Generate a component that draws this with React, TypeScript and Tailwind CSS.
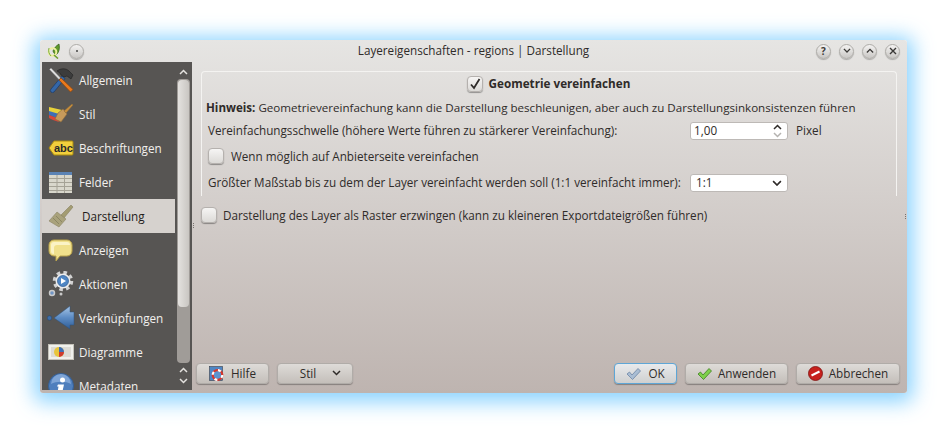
import React from "react";

const HammerIcon = () => (
  <svg width="26" height="26" viewBox="0 0 26 26">
    <path d="M3 22L14 9l3 2.500L6 25a2 2 0 0 1-3-3z" fill="#3467a8" stroke="#1c3a66" strokeWidth="0.7" />
    <path d="M9 4c4-3 9-3 12 0l4 4-2 4-4-3-3 1-3-2c-1-2-2-3-4-4z" fill="#3c3c3c" stroke="#1a1a1a" strokeWidth="0.5" />
    <path d="M1.500 2.500l1.500-1.500 9.500 10-1.500 1.500z" fill="#e2e2e2" stroke="#888" strokeWidth="0.5" />
    <path d="M11 13l2-2 12 11.500-2.500 2.500z" fill="#e9791c" stroke="#8a4510" strokeWidth="0.7" />
  </svg>
);

const StyleIcon = () => (
  <svg width="26" height="22" viewBox="0 0 26 22">
    <path d="M1 4l13 3-4 7-9-4z" fill="#e8d23a" />
    <path d="M1 8l10 3-2 4-8-3z" fill="#3f6fb5" />
    <path d="M1 12l8 3 2 4-6-2-4-2z" fill="#d8483a" />
    <path d="M10 10l5-4 4 5-6 8-6-3z" fill="#c79a5b" stroke="#8b6a3a" strokeWidth="0.6" />
    <path d="M16 8l8-7 1 1-7 8z" fill="#c98f3c" stroke="#8b6a3a" strokeWidth="0.5" />
  </svg>
);

const AbcIcon = () => (
  <svg width="26" height="16" viewBox="0 0 26 16">
    <path d="M6 1h18a1 1 0 0 1 1 1v12a1 1 0 0 1-1 1H6L1 8z" fill="#f2cf3c" stroke="#a98a10" />
    <text x="6" y="12" fontSize="11" fontWeight="700" fill="#2a2a2a" fontFamily="'Liberation Sans', sans-serif">abc</text>
  </svg>
);

const TableIcon = () => (
  <svg width="23" height="21" viewBox="0 0 23 21">
    <rect x="0" y="0" width="23" height="21" fill="#d9d7cc" />
    <rect x="0" y="0" width="23" height="3" fill="#5b83b5" />
    <path d="M0 6.500h23M0 10.500h23M0 14.500h23M0 18.500h23M8 3v18M15.500 3v18" stroke="#a5a296" strokeWidth="1" />
  </svg>
);

const BrushIcon = () => (
  <svg width="26" height="24" viewBox="0 0 26 24">
    <path d="M13 11L23 1l2 2-9 11z" fill="#a39c72" stroke="#7c7656" strokeWidth="0.5" />
    <path d="M9 8l9 7-7 8-10-6z" fill="#a9a27c" stroke="#827c5c" strokeWidth="0.5" />
    <path d="M5 14l6 6M8 12l6 6" stroke="#858060" strokeWidth="0.8" />
  </svg>
);

const BubbleIcon = () => (
  <svg width="25" height="23" viewBox="0 0 25 23">
    <path d="M6 1h13a5 5 0 0 1 5 5v6a5 5 0 0 1-5 5h-7l-4 5 0-5H6a5 5 0 0 1-5-5V6a5 5 0 0 1 5-5z" fill="#f0e08c" stroke="#b9a24a" />
    <path d="M6 3h13a3 3 0 0 1 3 3H9a3 3 0 0 0-3 3v6a3 3 0 0 1-3-3V6a3 3 0 0 1 3-3z" fill="#fbf3c6" />
  </svg>
);

const GearIcon = () => (
  <svg width="26" height="26" viewBox="0 0 26 26">
    <circle cx="15" cy="10" r="8.500" fill="none" stroke="#d2d2d2" strokeWidth="3.500" strokeDasharray="3.500 3.200" />
    <circle cx="15" cy="10" r="7.500" fill="#ececec" />
    <circle cx="15" cy="10" r="5.500" fill="#4f86c4" stroke="#2b5a94" strokeWidth="0.7" />
    <path d="M13 7l5 3-5 3z" fill="#fff" />
    <circle cx="4" cy="22" r="2.500" fill="#6f94c4" stroke="#c9c9c9" strokeWidth="1.500" />
    <circle cx="13" cy="23" r="1.500" fill="#c9c9c9" />
  </svg>
);

const LinkIcon = () => (
  <svg width="28" height="24" viewBox="0 0 28 24">
    <defs>
      <linearGradient id="arrowFill" x1="0" y1="0" x2="0" y2="1">
        <stop offset="0" stopColor="#a9c7e6" />
        <stop offset="0.5" stopColor="#5d8cc4" />
        <stop offset="1" stopColor="#2f5d96" />
      </linearGradient>
    </defs>
    <circle cx="2.500" cy="12" r="2.300" fill="#3f6ea8" stroke="#24466f" strokeWidth="0.5" />
    <path d="M7 12L23 0v6h4v13h-4v4z" fill="url(#arrowFill)" stroke="#2d527f" strokeWidth="0.5" />
  </svg>
);

const ChartIcon = () => (
  <svg width="26" height="18" viewBox="0 0 26 18">
    <rect x="0.500" y="1.500" width="25" height="15" fill="#f0f0ec" stroke="#c5c3ba" />
    <rect x="3" y="4" width="20" height="10" fill="#dddbd4" />
    <circle cx="11" cy="9" r="5" fill="#e8c53c" />
    <path d="M11 9V4a5 5 0 0 1 5 5z" fill="#3f6fb5" />
    <path d="M11 9h5a5 5 0 0 1-5 5z" fill="#cf3b2f" />
  </svg>
);

const InfoIcon = () => (
  <svg width="26" height="26" viewBox="0 0 26 26">
    <circle cx="13" cy="13" r="12.500" fill="#4f7fbd" stroke="#355f96" />
    <path d="M3 11a10 10 0 0 1 20 0c-5-3-15-3-20 0z" fill="#7fa5d6" />
    <circle cx="14.500" cy="7" r="2.500" fill="#fff" />
    <path d="M10 11.500h6l-2 9h2l-.5 2H9l1.500-9H9z" fill="#fff" />
  </svg>
);

const navItems: { label: string; icon: React.ReactNode; active?: boolean }[] = [
  { label: "Allgemein", icon: <HammerIcon /> },
  { label: "Stil", icon: <StyleIcon /> },
  { label: "Beschriftungen", icon: <AbcIcon /> },
  { label: "Felder", icon: <TableIcon /> },
  { label: "Darstellung", icon: <BrushIcon />, active: true },
  { label: "Anzeigen", icon: <BubbleIcon /> },
  { label: "Aktionen", icon: <GearIcon /> },
  { label: "Verknüpfungen", icon: <LinkIcon /> },
  { label: "Diagramme", icon: <ChartIcon /> },
  { label: "Metadaten", icon: <InfoIcon /> },
];

const Chevron: React.FC<{ up?: boolean; className?: string; size?: number }> = ({
  up,
  className,
  size = 9,
}) => (
  <svg width={size} height={size * 0.67} viewBox="0 0 9 6" className={className} fill="none" stroke="currentColor" strokeWidth="1.500">
    <path d={up ? "M1 5l3.500-3.500L8 5" : "M1 1l3.500 3.500L8 1"} />
  </svg>
);

const TitleButton: React.FC<{ children: React.ReactNode }> = ({ children }) => (
  <div className="flex h-[15px] w-[15px] items-center justify-center rounded-full border border-[#aeaca8] bg-gradient-to-b from-[#f4f3f2] to-[#c9c7c4] text-[#3a3836] shadow-[0_1px_1px_rgba(0,0,0,0.25)]">
    {children}
  </div>
);

const Checkbox: React.FC<{ checked?: boolean }> = ({ checked }) => (
  <div className="flex h-[16px] w-[16px] shrink-0 items-center justify-center rounded-[4px] border border-[#b5b1ae] bg-gradient-to-b from-[#f6f5f4] to-[#dcdad7] shadow-[0_1px_1px_rgba(0,0,0,0.35)]">
    {checked && (
      <svg width="12" height="12" viewBox="0 0 12 12" fill="none" stroke="#2f2c2a" strokeWidth="1.800">
        <path d="M2 6.500l3 3.500 5.500-9" />
      </svg>
    )}
  </div>
);

const DialogButton: React.FC<{ children: React.ReactNode; className?: string }> = ({
  children,
  className,
}) => (
  <div
    className={`flex h-[21px] items-center justify-center rounded-[4px] border bg-gradient-to-b shadow-[0_1px_1px_rgba(0,0,0,0.3)] ${
      className ?? ""
    }`}
  >
    {children}
  </div>
);

const CheckMark: React.FC<{ fill: string; stroke: string }> = ({ fill, stroke }) => (
  <svg width="15" height="12" viewBox="0 0 15 12">
    <path d="M1 6l2.500-2 2.500 3 6-6.500L14.500 3 6.500 11.500z" fill={fill} stroke={stroke} strokeWidth="0.8" />
  </svg>
);

const SplitterDots = ({ className }: { className: string }) => (
  <div className={`absolute flex flex-col gap-[1px] ${className}`}>
    <div className="h-[1px] w-[1px] bg-[#77726e]" />
    <div className="h-[1px] w-[1px] bg-[#77726e]" />
    <div className="h-[1px] w-[1px] bg-[#77726e]" />
  </div>
);

export default function App() {
  return (
    <div className="h-[434px] w-[947px] overflow-hidden bg-white pl-[40px] pt-[40px] font-['Open_Sans','Noto_Sans',sans-serif] text-[11.7px] text-[#2f2b29]">
      <div className="flex h-[353px] w-[867px] flex-col overflow-hidden rounded-[3px] bg-gradient-to-b from-[#e6e5e3] to-[#beb4b0] shadow-[0_3px_20px_6px_rgba(110,200,255,0.8)]">
        {/* title bar */}
        <div className="relative flex h-[22px] shrink-0 items-center justify-between pl-[7px] pr-[7px]">
          <div className="flex items-center gap-[8px]">
            <svg width="14" height="16" viewBox="0 0 14 16">
              <path d="M6 8c1-3 3-5 6-7 1 4 0 8-2 10-1 1-3 0-4-3z" fill="#5f9a2a" stroke="#2f5a12" strokeWidth="0.7" />
              <circle cx="5.500" cy="9" r="3.800" fill="none" stroke="#eef0a0" strokeWidth="2" />
              <path d="M7 12l4 3.500" stroke="#6f9e2c" strokeWidth="1.600" />
              <path d="M2 5c-1 3 0 6 2 8" fill="none" stroke="#5f9a2a" strokeWidth="0.8" />
            </svg>
            <TitleButton>
              <div className="h-[2px] w-[2px] rounded-full bg-[#444]" />
            </TitleButton>
          </div>
          <span className="absolute left-0 right-0 text-center text-[#2f2b29]">
            Layereigenschaften - regions | Darstellung
          </span>
          <div className="flex items-center gap-[8px]">
            <TitleButton>
              <span className="text-[10px] font-bold leading-none">?</span>
            </TitleButton>
            <TitleButton>
              <Chevron size={8} />
            </TitleButton>
            <TitleButton>
              <Chevron up size={8} />
            </TitleButton>
            <TitleButton>
              <svg width="8" height="8" viewBox="0 0 8 8" stroke="currentColor" strokeWidth="1.400">
                <path d="M1 1l6 6M7 1L1 7" />
              </svg>
            </TitleButton>
          </div>
        </div>

        <div className="flex min-h-0 flex-1 pl-[2px]">
          {/* sidebar */}
          <div className="flex h-[328px] w-[150px] shrink-0 overflow-hidden bg-[#575553]">
            <div className="flex w-[133px] shrink-0 flex-col pt-[1px]">
              {navItems.map((item) => (
                <div
                  key={item.label}
                  className={`flex h-[34px] shrink-0 items-center ${
                    item.active ? "bg-[#d6d2ce] text-[#1f1c1a]" : "text-[#f2f0ee]"
                  }`}
                >
                  <div className="flex w-[37px] shrink-0 items-center justify-center">
                    {item.icon}
                  </div>
                  <span className={item.active ? "pl-[3px] pt-[1px]" : "pt-[1px]"}>{item.label}</span>
                </div>
              ))}
            </div>
            {/* scrollbar */}
            <div className="flex flex-1 flex-col items-center pt-[7px] text-[#e4e2df]">
              <Chevron up />
              <div className="mt-[4px] h-[284px] w-[13px] rounded-[4px] bg-[#a09c98] p-[1px]">
                <div className="h-[227px] w-full rounded-[4px] bg-gradient-to-r from-[#e4e2df] to-[#c9c6c2]" />
              </div>
              <Chevron up className="mt-[4px]" />
              <Chevron className="mt-[5px]" />
            </div>
          </div>

          {/* content */}
          <div className="relative flex min-w-0 flex-1 flex-col pl-[9px] pr-[10px] pt-[9px]">
            <SplitterDots className="left-[1px] top-[161px]" />
            <SplitterDots className="right-[1px] top-[152px]" />
            <div className="flex h-[125px] flex-col rounded-t-[4px] border-x border-t border-[#f4f3f1] pl-[4px]">
              <div className="flex h-[22px] items-center justify-center gap-[6px] pr-[5px] pt-[2px]">
                <Checkbox checked />
                <span className="font-bold">Geometrie vereinfachen</span>
              </div>
              <p className="mt-[2px] h-[24px] whitespace-nowrap text-[11.6px] leading-[24px]">
                <b>Hinweis:</b> Geometrievereinfachung kann die Darstellung beschleunigen, aber auch zu Darstellungsinkonsistenzen führen
              </p>
              <div className="flex h-[22px] items-center pl-[2px]">
                <span className="w-[482px] whitespace-nowrap">
                  Vereinfachungsschwelle (höhere Werte führen zu stärkerer Vereinfachung):
                </span>
                <div className="flex h-[18px] w-[98px] items-center justify-between rounded-[3px] border border-[#bdb9b6] bg-white pl-[3px] pr-[5px]">
                  <span>1,00</span>
                  <div className="flex flex-col gap-[2px]">
                    <Chevron up size={9} className="text-[#2f2b29]" />
                    <Chevron size={9} className="text-[#b5b3b0]" />
                  </div>
                </div>
                <span className="ml-[8px]">Pixel</span>
              </div>
              <div className="mt-[3px] flex h-[22px] items-center gap-[7px] pl-[2px]">
                <Checkbox />
                <span className="pt-[1px]">Wenn möglich auf Anbieterseite vereinfachen</span>
              </div>
              <div className="mt-[5px] flex h-[22px] items-center pl-[2px]">
                <span className="w-[482px] whitespace-nowrap">
                  Größter Maßstab bis zu dem der Layer vereinfacht werden soll (1:1 vereinfacht immer):
                </span>
                <div className="flex h-[18px] w-[98px] items-center justify-between rounded-[3px] border border-[#bdb9b6] bg-white pl-[5px] pr-[5px]">
                  <span>1:1</span>
                  <Chevron size={10} className="text-[#2f2b29]" />
                </div>
              </div>
            </div>
            <div className="mt-[10px] flex h-[18px] items-center gap-[6px]">
              <Checkbox />
              <span className="pt-[1px]">Darstellung des Layer als Raster erzwingen (kann zu kleineren Exportdateigrößen führen)</span>
            </div>

            {/* dialog buttons */}
            <div className="-ml-[5px] -mr-[3px] mt-auto flex items-center gap-[8px] pb-[9px]">
              <DialogButton className="w-[73px] gap-[6px] border-[#b0aca8] from-[#dedbd8] to-[#c4bfba]">
                <svg width="16" height="16" viewBox="0 0 16 16">
                  <rect x="0.500" y="0.500" width="13" height="14" fill="#4f86c4" stroke="#3a3f4a" strokeWidth="0.6" />
                  <circle cx="8.500" cy="9" r="4.800" fill="#5b93cf" stroke="#d9362b" strokeWidth="2.200" />
                  <circle cx="8.500" cy="9" r="4.800" fill="none" stroke="#fff" strokeWidth="2.200" strokeDasharray="3 4.500" />
                </svg>
                <span>Hilfe</span>
              </DialogButton>
              <DialogButton className="w-[76px] gap-[16px] border-[#b0aca8] from-[#dedbd8] to-[#c4bfba] pl-[11px]">
                <span>Stil</span>
                <Chevron size={9} />
              </DialogButton>
              <div className="flex-1" />
              <DialogButton className="w-[63px] gap-[7px] border-[#5ea6d6] from-[#e8eaec] to-[#cfd0d0]">
                <CheckMark fill="#a9bdd3" stroke="#6d87a6" />
                <span>OK</span>
              </DialogButton>
              <DialogButton className="w-[103px] gap-[6px] border-[#b0aca8] from-[#dedbd8] to-[#c4bfba]">
                <CheckMark fill="#7ed04a" stroke="#3f7d22" />
                <span>Anwenden</span>
              </DialogButton>
              <DialogButton className="w-[104px] gap-[6px] border-[#b0aca8] from-[#dedbd8] to-[#c4bfba]">
                <svg width="15" height="15" viewBox="0 0 15 15">
                  <circle cx="7.500" cy="7.500" r="7" fill="#c7211d" stroke="#7d1210" strokeWidth="0.8" />
                  <path d="M3.500 9.500l8-4" stroke="#fff" strokeWidth="2" />
                </svg>
                <span>Abbrechen</span>
              </DialogButton>
            </div>
          </div>
        </div>
      </div>
    </div>
  );
}
